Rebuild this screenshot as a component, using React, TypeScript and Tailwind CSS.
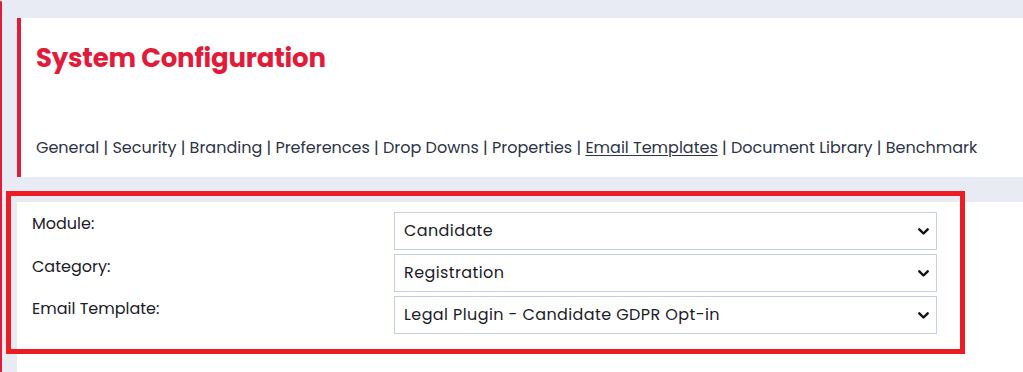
import React from "react";

const font = { fontFamily: "Poppins, Inter, 'Noto Sans', sans-serif" };

function Chevron() {
  return (
    <svg width="11" height="7" viewBox="0 0 11 7" className="shrink-0">
      <path d="M1.3 1.3 L5.5 5.5 L9.7 1.3" fill="none" stroke="#111" strokeWidth="2.4" strokeLinecap="round" strokeLinejoin="round" />
    </svg>
  );
}

function Select({ value }: { value: string }) {
  return (
    <div className="h-[38px] w-[543px] border border-[#c6cfe0] bg-white flex items-center justify-between pl-[9px] pr-[7px] text-[16px] tracking-[0.4px] text-[#1c1c28]">
      <span>{value}</span>
      <Chevron />
    </div>
  );
}

export default function App() {
  const links = ["General", "Security", "Branding", "Preferences", "Drop Downs", "Properties", "Email Templates", "Document Library", "Benchmark"];
  return (
    <div className="w-[1023px] h-[372px] bg-[#e8ebf3] flex overflow-hidden" style={font}>
      <div className="w-[2px] mt-[1px] bg-[#e31b3a] rounded-t-sm shrink-0" />
      <div className="flex-1 flex flex-col pl-[15px] pt-[18px]">
        <div className="bg-white border-l-4 border-[#e31b3a] h-[159px] pl-[15px] flex flex-col">
          <h1 className="text-[26px] font-bold text-[#e31b3a] mt-[24px] leading-[32px] tracking-[-0.2px]">System Configuration</h1>
          <div className="mt-[64px] text-[16px] text-[#2c3447] leading-[20px] flex items-center whitespace-nowrap">
            {links.map((l, i) => (
              <span key={l}>
                {i > 0 && <span className="mx-[4.25px]">|</span>}
                <span className={l === "Email Templates" ? "underline underline-offset-2" : ""}>{l}</span>
              </span>
            ))}
          </div>
        </div>
        <div className="relative flex-1 mt-[25px] bg-white">
          <div className="absolute left-[-11px] top-[-11px] w-[959px] h-[163px] border-[5px] border-[#ed1c24] pointer-events-none" />
          <div className="pt-[10px] pl-[15px] flex">
            <div className="w-[362px] flex flex-col text-[16px] text-[#1c1c28]">
              <div className="h-[42px] pt-[0px]">Module:</div>
              <div className="h-[42px] pt-[1px]">Category:</div>
              <div className="h-[42px] pt-[1px]">Email Template:</div>
            </div>
            <div className="flex flex-col gap-[4px]">
              <Select value="Candidate" />
              <Select value="Registration" />
              <Select value="Legal Plugin - Candidate GDPR Opt-in" />
            </div>
          </div>
        </div>
      </div>
    </div>
  );
}
